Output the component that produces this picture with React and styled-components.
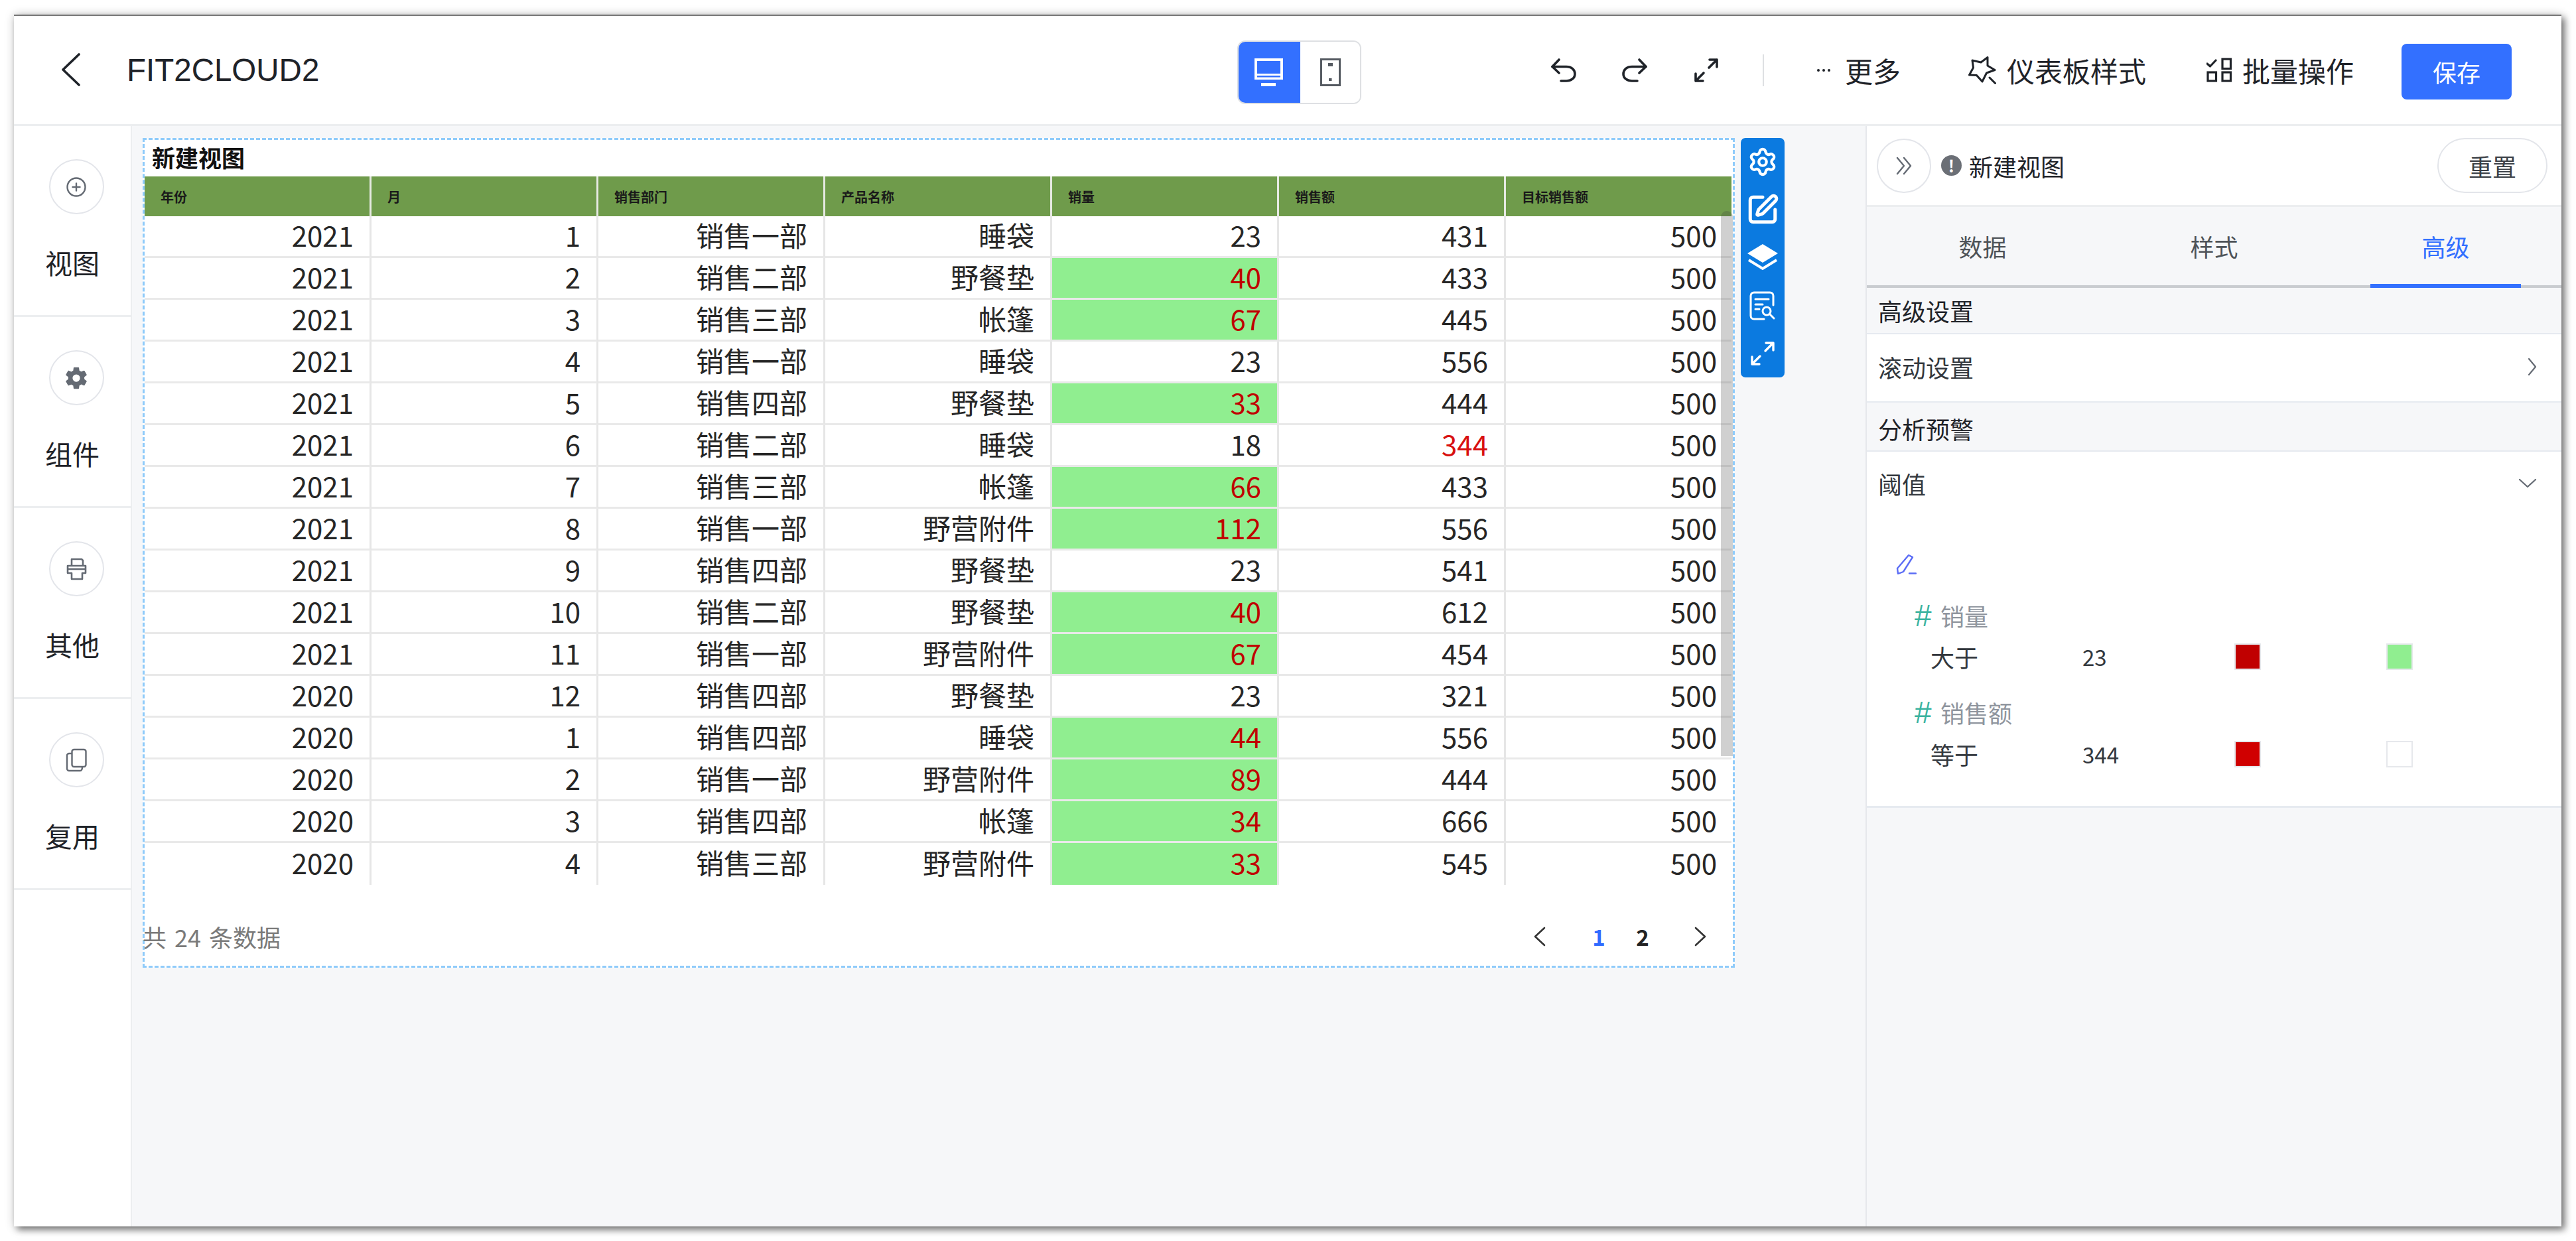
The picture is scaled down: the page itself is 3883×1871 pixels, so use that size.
import React from 'react';
import styled, { createGlobalStyle } from 'styled-components';
import { Settings, SquarePen } from 'lucide-react';
import { IoSettingsSharp } from 'react-icons/io5';

const columns = ['年份', '月', '销售部门', '产品名称', '销量', '销售额', '目标销售额'];

const rows = [
  [2021, 1, '销售一部', '睡袋', 23, 431],
  [2021, 2, '销售二部', '野餐垫', 40, 433],
  [2021, 3, '销售三部', '帐篷', 67, 445],
  [2021, 4, '销售一部', '睡袋', 23, 556],
  [2021, 5, '销售四部', '野餐垫', 33, 444],
  [2021, 6, '销售二部', '睡袋', 18, 344],
  [2021, 7, '销售三部', '帐篷', 66, 433],
  [2021, 8, '销售一部', '野营附件', 112, 556],
  [2021, 9, '销售四部', '野餐垫', 23, 541],
  [2021, 10, '销售二部', '野餐垫', 40, 612],
  [2021, 11, '销售一部', '野营附件', 67, 454],
  [2020, 12, '销售四部', '野餐垫', 23, 321],
  [2020, 1, '销售四部', '睡袋', 44, 556],
  [2020, 2, '销售一部', '野营附件', 89, 444],
  [2020, 3, '销售四部', '帐篷', 34, 666],
  [2020, 4, '销售三部', '野营附件', 33, 545],
];

const GlobalStyle = createGlobalStyle`
  html, body {
    margin: 0;
    background: #fff;
    font-family: "Noto Sans CJK SC", "Noto Sans", sans-serif;
    color: #1f2329;
  }
  * { box-sizing: border-box; }
`;

const Page = styled.div`
  width: 3883px;
  height: 1871px;
  padding: 22px 22px 22px 21px;
  overflow: hidden;
`;

const Frame = styled.div`
  width: 3840px;
  height: 1827px;
  display: flex;
  flex-direction: column;
  background: #fff;
  border-top: 2px solid #777;
  box-shadow: 5px 5px 10px rgba(0, 0, 0, 0.5), 0 0 14px rgba(0, 0, 0, 0.18);
`;

const TopBar = styled.header`
  height: 166px;
  flex: none;
  display: flex;
  align-items: center;
  border-bottom: 3px solid #eceef0;
`;

const TitleGroup = styled.div`
  width: 1844px;
  flex: none;
  display: flex;
  align-items: center;
  padding: 0 0 1px 72px;
  gap: 70px;
`;

const DocTitle = styled.span`
  font-family: "Liberation Sans", Arial, sans-serif;
  font-size: 47.5px;
  color: #1f2329;
`;

const DeviceToggle = styled.div`
  width: 187px;
  height: 96px;
  flex: none;
  display: flex;
  margin-top: 6px;
  border: 2px solid #dee0e3;
  border-radius: 12px;
  overflow: hidden;
`;

const DeviceButton = styled.div`
  width: ${(p) => (p.$active ? '95px' : '90px')};
  margin: ${(p) => (p.$active ? '-2px 0 -2px -2px' : '0')};
  display: flex;
  align-items: center;
  justify-content: center;
  background: ${(p) => (p.$active ? '#3370ff' : '#fff')};
`;

const ActionGroup = styled.div`
  display: flex;
  flex: none;
  align-items: center;
  margin-left: 286px;
`;

const IconAction = styled.span`
  display: flex;
  flex: none;
  color: #1f2329;
  margin-left: ${(p) => p.$gap || 0}px;
`;

const VDivider = styled.span`
  width: 2px;
  height: 48px;
  flex: none;
  background: #dee0e3;
  margin-left: 66px;
`;

const TextAction = styled.div`
  display: flex;
  flex: none;
  align-items: center;
  gap: ${(p) => p.$iconGap}px;
  margin-left: ${(p) => p.$gap}px;
  font-size: 42px;
  line-height: 56px;
  white-space: nowrap;
  color: #1f2329;
`;

const MoreDots = styled.span`
  display: flex;
  gap: 4px;
  &::before, &::after, i {
    content: '';
    width: 4px;
    height: 4px;
    border-radius: 50%;
    background: #1f2329;
  }
`;

const SaveButton = styled.button`
  width: 166px;
  height: 84px;
  flex: none;
  margin: 4px 0 0 72px;
  border: 0;
  border-radius: 8px;
  background: #3370ff;
  color: #fff;
  font: inherit;
  font-size: 36px;
`;

const Main = styled.div`
  flex: 1;
  min-height: 0;
  display: flex;
`;

const Sidebar = styled.aside`
  width: 178px;
  flex: none;
  background: #fff;
  border-right: 2px solid #eceef0;
`;

const SideSection = styled.div`
  height: 288px;
  display: flex;
  flex-direction: column;
  align-items: center;
  padding-top: 50px;
  gap: 46px;
  border-bottom: 3px solid #eceef0;
`;

const SideCircle = styled.div`
  width: 83px;
  height: 83px;
  margin-left: 12px;
  display: flex;
  align-items: center;
  justify-content: center;
  border: 2px solid #e3e5ea;
  border-radius: 50%;
  color: #646a73;
`;

const SideLabel = styled.span`
  font-size: 41px;
  line-height: 52px;
  color: #1f2329;
`;

const Canvas = styled.main`
  flex: 1;
  min-width: 0;
  display: flex;
  align-items: flex-start;
  gap: 9px;
  padding: 18px 0 0 16px;
  background: #f6f7f9;
`;

const ChartBox = styled.section`
  width: 2400px;
  height: 1251px;
  flex: none;
  display: flex;
  flex-direction: column;
  background: #fff;
  border: 3px dashed #8fcbfa;
`;

const ChartTitle = styled.div`
  height: 55px;
  padding-left: 11px;
  font-size: 35px;
  font-weight: 700;
  line-height: 52px;
  color: #111;
`;

const TableWrap = styled.div`
  position: relative;
`;

const Table = styled.table`
  width: 2392px;
  table-layout: fixed;
  border-collapse: separate;
  border-spacing: 0;
`;

const HeadCell = styled.th`
  width: 342px;
  height: 60px;
  padding: 0 0 0 24px;
  background: #6f9b4b;
  border-right: 3px solid #e6e9e2;
  font-size: 20px;
  font-weight: 700;
  text-align: left;
  color: #1a1a1a;
  &:last-child {
    width: auto;
    border-right: 0;
  }
`;

const Cell = styled.td`
  height: 63px;
  padding: 0 24px 5px 0;
  background: ${(p) => (p.$good ? '#90ee90' : '#fff')};
  background-clip: padding-box;
  border-right: 3px solid #e6e6e6;
  border-bottom: 3px solid #e9e9e9;
  font-size: 42px;
  line-height: 54px;
  text-align: right;
  color: ${(p) => p.$tone || '#262626'};
  tr:last-child & { border-bottom: 0; }
  &:last-child {
    padding-right: 22px;
    border-right: 0;
  }
`;

const ScrollThumb = styled.div`
  position: absolute;
  top: 52px;
  right: 0;
  width: 18px;
  height: 822px;
  background: rgba(60, 60, 60, 0.24);
  border-radius: 9px 9px 0 0;
`;

const TableFooter = styled.div`
  flex: 1;
  display: flex;
  align-items: center;
  justify-content: space-between;
  padding-top: 34px;
  padding-right: 40px;
`;

const TotalText = styled.span`
  margin-left: -3px;
  font-size: 36px;
  word-spacing: 4px;
  color: #7a7a7a;
`;

const Pager = styled.div`
  display: flex;
  align-items: center;
  color: #333;
`;

const PageNumber = styled.span`
  width: 66px;
  text-align: center;
  font-size: 33px;
  font-weight: 700;
  color: ${(p) => (p.$active ? '#2f6bff' : '#222')};
`;

const PagerArrow = styled.span`
  display: flex;
  margin: 0 ${(p) => p.$right || 0}px 0 ${(p) => p.$left || 0}px;
`;

const FloatBar = styled.div`
  width: 66px;
  height: 361px;
  flex: none;
  display: flex;
  flex-direction: column;
  border-radius: 7px;
  background: #0b7ae0;
  color: #fff;
`;

const FloatItem = styled.div`
  flex: 1;
  display: flex;
  align-items: center;
  justify-content: center;
`;

const Panel = styled.aside`
  width: 1049px;
  flex: none;
  display: flex;
  flex-direction: column;
  background: #f6f7f9;
  border-left: 2px solid #e6e8ec;
`;

const PanelHead = styled.div`
  height: 122px;
  flex: none;
  display: flex;
  align-items: center;
  padding: 0 21px 0 15px;
  background: #fff;
  border-bottom: 3px solid #eceef0;
`;

const RoundButton = styled.div`
  width: 82px;
  height: 82px;
  display: flex;
  align-items: center;
  justify-content: center;
  border: 2px solid #e3e5ea;
  border-radius: 50%;
`;

const InfoDot = styled.span`
  width: 31px;
  height: 31px;
  margin: 0 11px 0 15px;
  display: flex;
  align-items: center;
  justify-content: center;
  border-radius: 50%;
  background: #6b6f76;
  color: #fff;
  font-size: 25px;
  font-weight: 700;
  line-height: 1;
`;

const PanelTitle = styled.span`
  flex: 1;
  font-size: 36px;
  color: #1f2329;
`;

const ResetButton = styled.div`
  width: 166px;
  height: 83px;
  display: flex;
  align-items: center;
  justify-content: center;
  border: 2px solid #e3e5ea;
  border-radius: 42px;
  font-size: 36px;
  color: #3a3f46;
`;

const Tabs = styled.div`
  height: 122px;
  flex: none;
  display: flex;
  border-bottom: 4px solid #c9ccd0;
`;

const Tab = styled.div`
  position: relative;
  flex: 1;
  display: flex;
  align-items: center;
  justify-content: center;
  font-size: 36px;
  color: ${(p) => (p.$active ? '#3370ff' : '#4e5358')};
  &::after {
    content: '';
    display: ${(p) => (p.$active ? 'block' : 'none')};
    position: absolute;
    left: 61px;
    right: 61px;
    bottom: -4px;
    height: 6px;
    background: #3370ff;
  }
`;

const GroupTitle = styled.div`
  height: ${(p) => p.$h}px;
  flex: none;
  display: flex;
  align-items: flex-end;
  padding: 0 0 ${(p) => p.$pb}px 17px;
  border-bottom: 2px solid #e6eaf0;
  font-size: 36px;
  line-height: 50px;
  color: #1f2329;
`;

const CollapseRow = styled.div`
  height: ${(p) => p.$h}px;
  flex: none;
  display: flex;
  align-items: center;
  justify-content: space-between;
  padding: 0 37px 3px 17px;
  background: #fff;
  border-bottom: ${(p) => (p.$open ? '0' : '2px solid #e6eaf0')};
  font-size: 36px;
  color: #33383e;
`;

const ThresholdBody = styled.div`
  height: 439px;
  flex: none;
  padding-top: 56px;
  background: #fff;
  border-bottom: 3px solid #e6eaf0;
`;

const PenRow = styled.div`
  display: flex;
  height: 31px;
  padding-left: 44px;
  margin-bottom: 37px;
`;

const FieldName = styled.div`
  display: flex;
  align-items: center;
  height: 50px;
  margin-top: ${(p) => p.$top || 0}px;
  padding-left: 72px;
  gap: 10px;
  font-size: 36px;
  color: #8f959e;
`;

const Hash = styled.span`
  width: 29px;
  font-size: 46px;
  font-family: "Liberation Sans", sans-serif;
  color: #3bb3a0;
`;

const RuleRow = styled.div`
  display: grid;
  grid-template-columns: 229px 229px 229px 40px;
  align-items: center;
  height: 40px;
  margin-top: ${(p) => p.$top}px;
  padding-left: 96px;
  font-size: 36px;
  color: #33383e;
`;

const RuleValue = styled.span`
  font-size: 33px;
`;

const Swatch = styled.span`
  width: 40px;
  height: 40px;
  background: ${(p) => p.$color};
  border: 2px solid #e6e8ec;
`;

function Chevron({ dir, w, h, sw = 3, color = 'currentColor' }) {
  const points = {
    left: `${w - 2},2 2,${h / 2} ${w - 2},${h - 2}`,
    right: `2,2 ${w - 2},${h / 2} 2,${h - 2}`,
    down: `2,2 ${w / 2},${h - 2} ${w - 2},2`,
  };
  return (
    <svg width={w} height={h} viewBox={`0 0 ${w} ${h}`} fill="none">
      <polyline points={points[dir]} stroke={color} strokeWidth={sw} strokeLinecap="round" strokeLinejoin="round" />
    </svg>
  );
}

const MonitorIcon = () => (
  <svg width="43" height="42" viewBox="0 0 43 42">
    <rect x="0" y="0" width="43" height="32" fill="#fff" />
    <rect x="4" y="4" width="35" height="19" fill="#3370ff" />
    <rect x="4" y="26" width="35" height="2.5" fill="#3370ff" />
    <rect x="10" y="37" width="22" height="5" fill="#fff" />
  </svg>
);

const PhoneIcon = () => (
  <svg width="31" height="42" viewBox="0 0 31 42" fill="none">
    <rect x="1.5" y="1.5" width="28" height="39" stroke="#555a61" strokeWidth="3" />
    <rect x="12" y="7" width="7" height="5" fill="#555a61" />
    <rect x="13" y="30" width="4.5" height="4" fill="#555a61" />
  </svg>
);

const UndoIcon = ({ flip }) => (
  <svg width="38" height="36" viewBox="0 0 38 36" fill="none">
    <g transform={flip ? 'translate(38 0) scale(-1 1)' : undefined} stroke="currentColor" strokeWidth="3.6" strokeLinecap="round" strokeLinejoin="round">
      <path d="M12 2 L2 12.5 L12 22" />
      <path d="M2 12.5 H23 C31 12.5 36 17 36 23.5 C36 30 30 34 23 34 H15" />
    </g>
  </svg>
);

const ExpandIcon = ({ size = 38, sw = 3.6 }) => (
  <svg width={size} height={size} viewBox="0 0 38 38" fill="none" stroke="currentColor" strokeWidth={sw} strokeLinecap="round" strokeLinejoin="round">
    <path d="M24 3 H35 V14 M35 3 L23 15" />
    <path d="M3 24 V35 H14 M3 35 L15 23" />
  </svg>
);

const StarIcon = () => (
  <svg width="42" height="42" viewBox="0 0 42 42" fill="none" stroke="currentColor" strokeWidth="3" strokeLinejoin="round" strokeLinecap="round">
    <path d="M6 6 L19 9 L29 1.5 L29 14 L40 20.5 L27.5 25 L21 38 L12.5 28.5 L1.5 28 L7.5 17 Z" />
    <path d="M32 32 L40.5 40.5" />
  </svg>
);

const BatchIcon = () => (
  <svg width="38" height="37" viewBox="0 0 38 37" fill="none" stroke="currentColor" strokeWidth="3.2">
    <path d="M1 9 L5.5 13 L14 4" strokeLinecap="round" strokeLinejoin="round" />
    <rect x="24" y="2" width="12.5" height="14.5" />
    <rect x="2" y="22" width="12.5" height="13" />
    <rect x="24" y="22" width="12.5" height="13" />
  </svg>
);

const PlusCircleIcon = () => (
  <svg width="32" height="32" viewBox="0 0 32 32" fill="none" stroke="currentColor" strokeWidth="2.4" strokeLinecap="round">
    <circle cx="16" cy="16" r="13.5" />
    <path d="M16 10.5 V21.5 M10.5 16 H21.5" />
  </svg>
);

const PrinterIcon = () => (
  <svg width="33" height="36" viewBox="0 0 33 36" fill="none" stroke="currentColor" strokeWidth="2.6" strokeLinejoin="round">
    <path d="M9 13 V3 H24 L26 5 V13" />
    <path d="M3 13 H30 V24 H25 V33 H9 V24 H3 Z" />
    <path d="M3 18 H30" />
  </svg>
);

const CopyIcon = () => (
  <svg width="33" height="36" viewBox="0 0 33 36" fill="none" stroke="currentColor" strokeWidth="2.4" strokeLinejoin="round">
    <rect x="9.5" y="2" width="21" height="26" rx="3" />
    <path d="M9.5 8 H5 C3.5 8 2 9.5 2 11 V31 C2 32.5 3.5 34 5 34 H22 C24 34 25 33 25 28" />
  </svg>
);

const DoubleChevronIcon = () => (
  <svg width="26" height="28" viewBox="0 0 26 28" fill="none" stroke="#646a73" strokeWidth="2.4" strokeLinecap="round" strokeLinejoin="round">
    <path d="M3 2 L13 14 L3 26" />
    <path d="M13 2 L23 14 L13 26" />
  </svg>
);

const LayersIcon = () => (
  <svg width="46" height="42" viewBox="0 0 46 42">
    <path d="M23 0 L46 14 L23 28 L0 14 Z" fill="#fff" />
    <path d="M2 24 L23 37 L44 24" fill="none" stroke="#fff" strokeWidth="4" />
  </svg>
);

const ReportIcon = () => (
  <svg width="40" height="44" viewBox="0 0 40 44" fill="none" stroke="#fff" strokeWidth="3" strokeLinecap="round">
    <path d="M22 42 H7 C4 42 2 40 2 37 V7 C2 4 4 2 7 2 H31 C34 2 36 4 36 7 V21" />
    <path d="M9 12 H29 M9 20 H20 M9 27 H15" />
    <circle cx="26" cy="30" r="6" />
    <path d="M31 35 L37 41" />
  </svg>
);

const PencilIcon = () => (
  <svg width="31" height="31" viewBox="0 0 31 31" fill="none" stroke="#5a6cf5" strokeWidth="2.4" strokeLinejoin="round" strokeLinecap="round">
    <path d="M19 2 L25 5 L11 27 L3 30 L2 22 Z" />
    <path d="M20 29.5 H30" />
  </svg>
);

const sideItems = [
  ['视图', <PlusCircleIcon key="a" />],
  ['组件', <IoSettingsSharp key="b" size={36} />],
  ['其他', <PrinterIcon key="c" />],
  ['复用', <CopyIcon key="d" />],
];

export default function App() {
  return (
    <Page>
      <GlobalStyle />
      <Frame>
        <TopBar>
          <TitleGroup>
            <Chevron dir="left" w={28} h={50} sw={3.6} />
            <DocTitle>FIT2CLOUD2</DocTitle>
          </TitleGroup>
          <DeviceToggle>
            <DeviceButton $active><MonitorIcon /></DeviceButton>
            <DeviceButton><PhoneIcon /></DeviceButton>
          </DeviceToggle>
          <ActionGroup>
            <IconAction><UndoIcon /></IconAction>
            <IconAction $gap={69}><UndoIcon flip /></IconAction>
            <IconAction $gap={70}><ExpandIcon /></IconAction>
            <VDivider />
            <TextAction $gap={80} $iconGap={22}>
              <MoreDots><i /></MoreDots>
              更多
            </TextAction>
            <TextAction $gap={102} $iconGap={16}><StarIcon />仪表板样式</TextAction>
            <TextAction $gap={91} $iconGap={16}><BatchIcon />批量操作</TextAction>
            <SaveButton>保存</SaveButton>
          </ActionGroup>
        </TopBar>
        <Main>
          <Sidebar>
            {sideItems.map(([label, icon]) => (
              <SideSection key={label}>
                <SideCircle>{icon}</SideCircle>
                <SideLabel>{label}</SideLabel>
              </SideSection>
            ))}
          </Sidebar>
          <Canvas>
            <ChartBox>
              <ChartTitle>新建视图</ChartTitle>
              <TableWrap>
                <Table>
                  <thead>
                    <tr>
                      {columns.map((c) => <HeadCell key={c}>{c}</HeadCell>)}
                    </tr>
                  </thead>
                  <tbody>
                    {rows.map(([year, month, dept, product, qty, amount], i) => (
                      <tr key={i}>
                        <Cell>{year}</Cell>
                        <Cell>{month}</Cell>
                        <Cell>{dept}</Cell>
                        <Cell>{product}</Cell>
                        <Cell $good={qty > 23} $tone={qty > 23 ? '#c00000' : undefined}>{qty}</Cell>
                        <Cell $tone={amount === 344 ? '#d81111' : undefined}>{amount}</Cell>
                        <Cell>500</Cell>
                      </tr>
                    ))}
                  </tbody>
                </Table>
                <ScrollThumb />
              </TableWrap>
              <TableFooter>
                <TotalText>共 24 条数据</TotalText>
                <Pager>
                  <PagerArrow $right={47}><Chevron dir="left" w={18} h={30} sw={2.6} /></PagerArrow>
                  <PageNumber $active>1</PageNumber>
                  <PageNumber>2</PageNumber>
                  <PagerArrow $left={45}><Chevron dir="right" w={18} h={30} sw={2.6} /></PagerArrow>
                </Pager>
              </TableFooter>
            </ChartBox>
            <FloatBar>
              <FloatItem><Settings size={46} strokeWidth={2.2} /></FloatItem>
              <FloatItem><SquarePen size={50} strokeWidth={2.4} /></FloatItem>
              <FloatItem><LayersIcon /></FloatItem>
              <FloatItem><ReportIcon /></FloatItem>
              <FloatItem><ExpandIcon sw={3.4} /></FloatItem>
            </FloatBar>
          </Canvas>
          <Panel>
            <PanelHead>
              <RoundButton><DoubleChevronIcon /></RoundButton>
              <InfoDot>!</InfoDot>
              <PanelTitle>新建视图</PanelTitle>
              <ResetButton>重置</ResetButton>
            </PanelHead>
            <Tabs>
              <Tab>数据</Tab>
              <Tab>样式</Tab>
              <Tab $active>高级</Tab>
            </Tabs>
            <GroupTitle $h={70} $pb={9}>高级设置</GroupTitle>
            <CollapseRow $h={103}>
              滚动设置
              <Chevron dir="right" w={14} h={28} sw={2.2} color="#646a73" />
            </CollapseRow>
            <GroupTitle $h={74} $pb={8}>分析预警</GroupTitle>
            <CollapseRow $h={98} $open>
              阈值
              <Chevron dir="down" w={28} h={15} sw={2.2} color="#646a73" />
            </CollapseRow>
            <ThresholdBody>
              <PenRow><PencilIcon /></PenRow>
              <FieldName><Hash>#</Hash>销量</FieldName>
              <RuleRow $top={11}>
                <span>大于</span>
                <RuleValue>23</RuleValue>
                <Swatch $color="#c00000" />
                <Swatch $color="#90ee90" />
              </RuleRow>
              <FieldName $top={45}><Hash>#</Hash>销售额</FieldName>
              <RuleRow $top={12}>
                <span>等于</span>
                <RuleValue>344</RuleValue>
                <Swatch $color="#d00000" />
                <Swatch $color="#ffffff" />
              </RuleRow>
            </ThresholdBody>
          </Panel>
        </Main>
      </Frame>
    </Page>
  );
}
